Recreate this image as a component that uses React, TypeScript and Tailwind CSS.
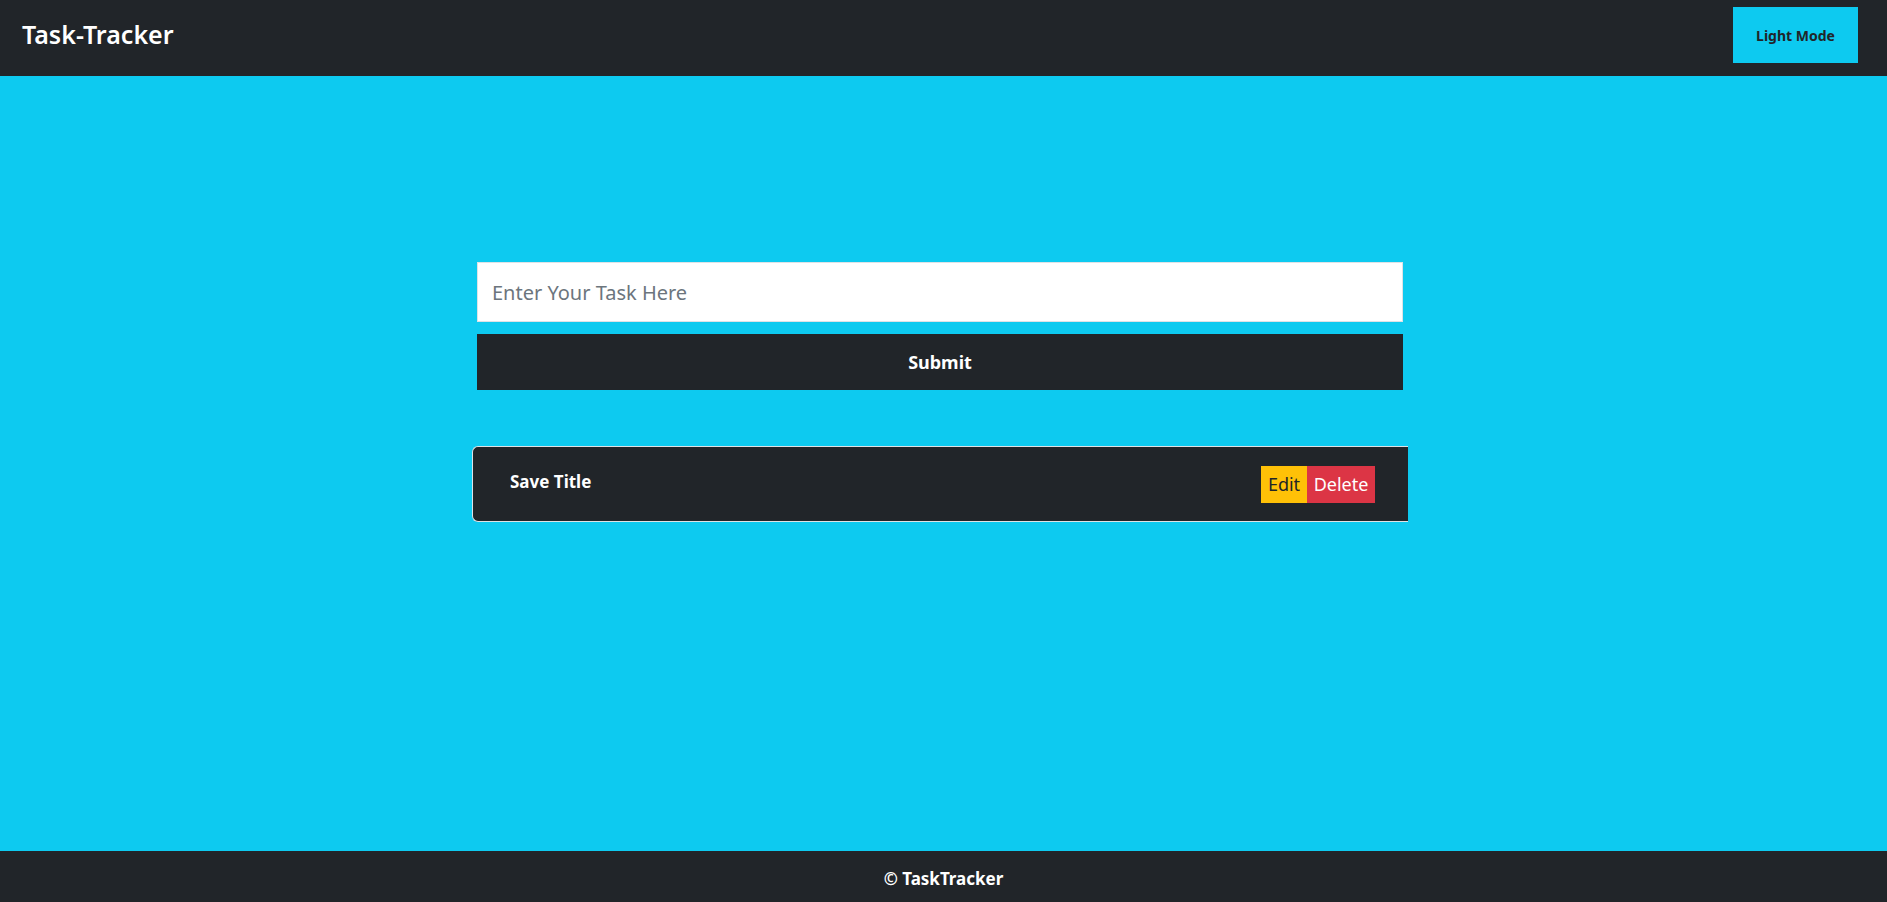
export default function App() {
  return (
    <div className="flex h-[902px] flex-col bg-[#0dcaf0] font-['Noto_Sans',sans-serif]">
      <nav className="flex h-[76px] shrink-0 items-center justify-between bg-[#212529] pb-[6px] pl-[22px] pr-[29px]">
        <span className="text-[25px] font-semibold text-white">Task-Tracker</span>
        <button className="h-[56px] w-[125px] bg-[#0dcaf0] text-[14px] font-bold text-[#212529]">
          Light Mode
        </button>
      </nav>

      <main className="flex-1 pt-[186px]">
        <form className="ml-[477px] flex w-[926px] flex-col gap-[12px]">
          <input
            type="text"
            placeholder="Enter Your Task Here"
            className="h-[60px] w-full border border-[#dee2e6] bg-white px-[14px] text-[20px] text-[#212529] placeholder:text-[#6c757d] outline-none"
          />
          <button type="button" className="h-[56px] w-full bg-[#212529] text-[18px] font-bold text-white">
            Submit
          </button>
        </form>

        <div className="ml-[472px] mt-[56px] flex h-[76px] w-[936px] items-center justify-between rounded-l-md border-y border-l border-[#dee2e6] bg-[#212529] pl-[37px] pr-[33px]">
          <span className="-mt-[5px] text-[17px] font-bold text-white">Save Title</span>
          <div className="flex">
            <button className="h-[37px] w-[46px] bg-[#ffc107] text-[18px] text-[#212529]">Edit</button>
            <button className="h-[37px] w-[68px] bg-[#dc3545] text-[18px] text-white">Delete</button>
          </div>
        </div>
      </main>

      <footer className="flex h-[51px] shrink-0 items-center justify-center bg-[#212529] pt-[5px]">
        <span className="text-[17px] font-bold text-white">© TaskTracker</span>
      </footer>
    </div>
  );
}
